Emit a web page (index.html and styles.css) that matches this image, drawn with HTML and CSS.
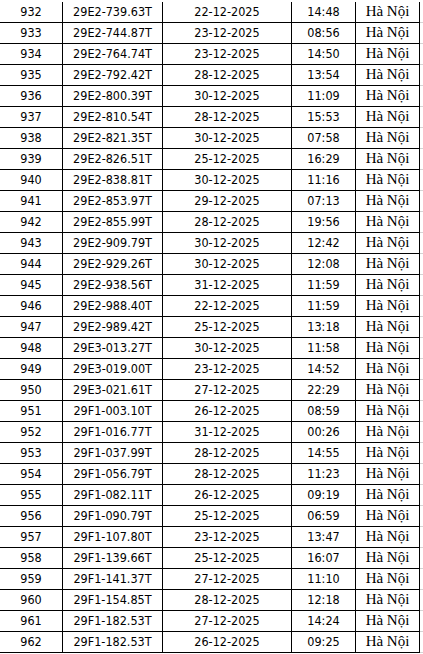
FILE: index.html
```html
<!DOCTYPE html>
<html lang="vi">
<head>
<meta charset="utf-8">
<title>Danh sách</title>
<link rel="stylesheet" href="styles.css">
</head>
<body>
<table class="sheet">
<colgroup>
<col class="c-no"><col class="c-plate"><col class="c-date"><col class="c-time"><col class="c-place"><col class="c-rest">
</colgroup>
<tbody>
<tr><td>932</td><td>29E2-739.63T</td><td>22-12-2025</td><td>14:48</td><td class="place">Hà Nội</td><td class="rest"></td></tr>
<tr><td>933</td><td>29E2-744.87T</td><td>23-12-2025</td><td>08:56</td><td class="place">Hà Nội</td><td class="rest"></td></tr>
<tr><td>934</td><td>29E2-764.74T</td><td>23-12-2025</td><td>14:50</td><td class="place">Hà Nội</td><td class="rest"></td></tr>
<tr><td>935</td><td>29E2-792.42T</td><td>28-12-2025</td><td>13:54</td><td class="place">Hà Nội</td><td class="rest"></td></tr>
<tr><td>936</td><td>29E2-800.39T</td><td>30-12-2025</td><td>11:09</td><td class="place">Hà Nội</td><td class="rest"></td></tr>
<tr><td>937</td><td>29E2-810.54T</td><td>28-12-2025</td><td>15:53</td><td class="place">Hà Nội</td><td class="rest"></td></tr>
<tr><td>938</td><td>29E2-821.35T</td><td>30-12-2025</td><td>07:58</td><td class="place">Hà Nội</td><td class="rest"></td></tr>
<tr><td>939</td><td>29E2-826.51T</td><td>25-12-2025</td><td>16:29</td><td class="place">Hà Nội</td><td class="rest"></td></tr>
<tr><td>940</td><td>29E2-838.81T</td><td>30-12-2025</td><td>11:16</td><td class="place">Hà Nội</td><td class="rest"></td></tr>
<tr><td>941</td><td>29E2-853.97T</td><td>29-12-2025</td><td>07:13</td><td class="place">Hà Nội</td><td class="rest"></td></tr>
<tr><td>942</td><td>29E2-855.99T</td><td>28-12-2025</td><td>19:56</td><td class="place">Hà Nội</td><td class="rest"></td></tr>
<tr><td>943</td><td>29E2-909.79T</td><td>30-12-2025</td><td>12:42</td><td class="place">Hà Nội</td><td class="rest"></td></tr>
<tr><td>944</td><td>29E2-929.26T</td><td>30-12-2025</td><td>12:08</td><td class="place">Hà Nội</td><td class="rest"></td></tr>
<tr><td>945</td><td>29E2-938.56T</td><td>31-12-2025</td><td>11:59</td><td class="place">Hà Nội</td><td class="rest"></td></tr>
<tr><td>946</td><td>29E2-988.40T</td><td>22-12-2025</td><td>11:59</td><td class="place">Hà Nội</td><td class="rest"></td></tr>
<tr><td>947</td><td>29E2-989.42T</td><td>25-12-2025</td><td>13:18</td><td class="place">Hà Nội</td><td class="rest"></td></tr>
<tr><td>948</td><td>29E3-013.27T</td><td>30-12-2025</td><td>11:58</td><td class="place">Hà Nội</td><td class="rest"></td></tr>
<tr><td>949</td><td>29E3-019.00T</td><td>23-12-2025</td><td>14:52</td><td class="place">Hà Nội</td><td class="rest"></td></tr>
<tr><td>950</td><td>29E3-021.61T</td><td>27-12-2025</td><td>22:29</td><td class="place">Hà Nội</td><td class="rest"></td></tr>
<tr><td>951</td><td>29F1-003.10T</td><td>26-12-2025</td><td>08:59</td><td class="place">Hà Nội</td><td class="rest"></td></tr>
<tr><td>952</td><td>29F1-016.77T</td><td>31-12-2025</td><td>00:26</td><td class="place">Hà Nội</td><td class="rest"></td></tr>
<tr><td>953</td><td>29F1-037.99T</td><td>28-12-2025</td><td>14:55</td><td class="place">Hà Nội</td><td class="rest"></td></tr>
<tr><td>954</td><td>29F1-056.79T</td><td>28-12-2025</td><td>11:23</td><td class="place">Hà Nội</td><td class="rest"></td></tr>
<tr><td>955</td><td>29F1-082.11T</td><td>26-12-2025</td><td>09:19</td><td class="place">Hà Nội</td><td class="rest"></td></tr>
<tr><td>956</td><td>29F1-090.79T</td><td>25-12-2025</td><td>06:59</td><td class="place">Hà Nội</td><td class="rest"></td></tr>
<tr><td>957</td><td>29F1-107.80T</td><td>23-12-2025</td><td>13:47</td><td class="place">Hà Nội</td><td class="rest"></td></tr>
<tr><td>958</td><td>29F1-139.66T</td><td>25-12-2025</td><td>16:07</td><td class="place">Hà Nội</td><td class="rest"></td></tr>
<tr><td>959</td><td>29F1-141.37T</td><td>27-12-2025</td><td>11:10</td><td class="place">Hà Nội</td><td class="rest"></td></tr>
<tr><td>960</td><td>29F1-154.85T</td><td>28-12-2025</td><td>12:18</td><td class="place">Hà Nội</td><td class="rest"></td></tr>
<tr><td>961</td><td>29F1-182.53T</td><td>27-12-2025</td><td>14:24</td><td class="place">Hà Nội</td><td class="rest"></td></tr>
<tr><td>962</td><td>29F1-182.53T</td><td>26-12-2025</td><td>09:25</td><td class="place">Hà Nội</td><td class="rest"></td></tr>
</tbody>
</table>
</body>
</html>
```
FILE: styles.css
```css
html, body {
  margin: 0;
  padding: 0;
  background: #ffffff;
}

.sheet {
  margin-top: 2px;
  width: 423px;
  table-layout: fixed;
  border-collapse: separate;
  border-spacing: 0;
  font-family: "DejaVu Sans Condensed", "DejaVu Sans", sans-serif;
  font-size: 12.5px;
  color: #000000;
}

.c-no { width: 63px; }
.c-plate { width: 100px; }
.c-date { width: 129px; }
.c-time { width: 64px; }
.c-place { width: 64px; }
.c-rest { width: 3px; }

.sheet td {
  box-sizing: border-box;
  height: 21px;
  padding: 0 0 1px 0;
  border-right: 1px solid #000000;
  border-bottom: 1px solid #000000;
  text-align: center;
  vertical-align: bottom;
  line-height: 18px;
  white-space: nowrap;
  overflow: hidden;
}

.sheet td.place {
  font-family: "Liberation Serif", "Times New Roman", serif;
  font-size: 15px;
  line-height: 18px;
  padding-bottom: 2px;
}

.sheet td.rest {
  border-right: none;
  border-bottom: 1px solid #d4d4d4;
}
```
